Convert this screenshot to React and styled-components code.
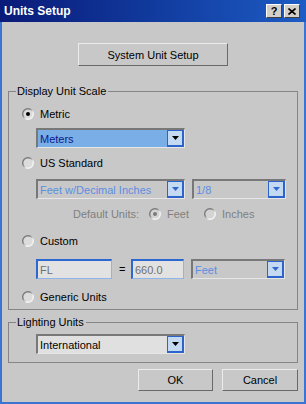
import React, { useId } from "react";
import styled, { createGlobalStyle } from "styled-components";

// ********
// small drawn parts
// ********

function Radio({ checked, disabled }) {
	const id = useId();
	return (
		<RadioSvg viewBox="0 0 12 12">
			<defs>
				<linearGradient id={id} x1="0" y1="0" x2="1" y2="1">
					<stop offset="0.35" stopColor="#7a7a7a" />
					<stop offset="0.65" stopColor="#f4f4f4" />
				</linearGradient>
			</defs>
			<circle cx="6" cy="6" r="5.3" fill={disabled ? "#d4d4d4" : "#dcdcdc"} stroke={`url(#${id})`} strokeWidth="1.4" />
			{checked && <circle cx="6" cy="6" r="2" fill={disabled ? "#7a7a7a" : "#000"} />}
		</RadioSvg>
	);
}

function Arrow({ color }) {
	return (
		<svg width="7" height="4" viewBox="0 0 7 4">
			<path d="M0 0h7L3.5 4z" fill={color} />
		</svg>
	);
}

function Combo({ value, width, variant = "normal" }) {
	return (
		<ComboBox $w={width} $variant={variant}>
			<ComboText $variant={variant}>{value}</ComboText>
			<ComboButton>
				<Arrow color={variant === "disabled" ? "#2f66d0" : "#000"} />
			</ComboButton>
		</ComboBox>
	);
}

// ********
// component
// ********

export default function App() {
	return (
		<>
			<GlobalStyle />
			<Window>
				<TitleBar>
					<span>Units Setup</span>
					<TitleButtons>
						<TitleButton>?</TitleButton>
						<TitleButton>
							<svg width="8" height="7" viewBox="0 0 8 7">
								<path d="M0.5 0.5l7 6M7.5 0.5l-7 6" stroke="#000" strokeWidth="1.6" />
							</svg>
						</TitleButton>
					</TitleButtons>
				</TitleBar>

				<Body>
					<SetupButton>System Unit Setup</SetupButton>

					<Group>
						<Legend>Display Unit Scale</Legend>

						<RadioRow $top={9}>
							<Radio checked />
							<span>Metric</span>
						</RadioRow>
						<Row $top={7}>
							<Combo value="Meters" width={149} variant="active" />
						</Row>

						<RadioRow $top={8}>
							<Radio />
							<span>US Standard</span>
						</RadioRow>
						<Row $top={9}>
							<Combo value="Feet w/Decimal Inches" width={149} variant="disabled" />
							<Combo value="1/8" width={94} variant="disabled" />
						</Row>
						<UnitsRow $top={8}>
							<span>Default Units:</span>
							<Radio checked disabled />
							<span>Feet</span>
							<Radio disabled />
							<span>Inches</span>
						</UnitsRow>

						<RadioRow $top={13}>
							<Radio />
							<span>Custom</span>
						</RadioRow>
						<Row $top={11}>
							<Field $w={76}>FL</Field>
							<Equals>=</Equals>
							<Field $w={53}>660.0</Field>
							<Combo value="Feet" width={94} variant="disabled" />
						</Row>

						<RadioRow $top={11} $bottom={5}>
							<Radio />
							<span>Generic Units</span>
						</RadioRow>
					</Group>

					<Group $top={6}>
						<Legend>Lighting Units</Legend>
						<Row $top={5} $bottom={8}>
							<Combo value="International" width={149} />
						</Row>
					</Group>

					<Footer>
						<DialogButton $w={75}>OK</DialogButton>
						<DialogButton $w={76}>Cancel</DialogButton>
					</Footer>
				</Body>
			</Window>
		</>
	);
}

// ********
// styles
// ********

const GlobalStyle = createGlobalStyle`
	body {
		margin: 0;
		font-family: "Liberation Sans", Arial, sans-serif;
		font-size: 11px;
	}
`;
const Window = styled.div`
	width: 306px;
	height: 404px;
	display: flex;
	flex-direction: column;
	background: #c8c8c8;
	color: #000;
`;
const TitleBar = styled.div`
	height: 22px;
	flex-shrink: 0;
	display: flex;
	align-items: center;
	padding: 0 6px 0 4px;
	background: linear-gradient(90deg, #0a1a78 0%, #10379a 45%, #1d5cc4 100%);
	color: #fff;
	font-weight: bold;
	font-size: 12px;
`;
const TitleButtons = styled.div`
	margin-left: auto;
	display: flex;
	gap: 2px;
`;
const TitleButton = styled.div`
	width: 16px;
	height: 14px;
	box-sizing: border-box;
	display: flex;
	align-items: center;
	justify-content: center;
	background: #d4d0c8;
	border: 1px solid;
	border-color: #fff #404040 #404040 #fff;
	color: #000;
	font-size: 11px;
	font-weight: bold;
`;
const Body = styled.div`
	flex: 1;
	display: flex;
	flex-direction: column;
	padding: 0 6px;
	border: 2px solid #3c74d4;
	border-top: none;
`;
const SetupButton = styled.div`
	align-self: center;
	width: 150px;
	height: 23px;
	margin-top: 21px;
	margin-bottom: 19px;
	box-sizing: border-box;
	display: flex;
	align-items: center;
	justify-content: center;
	border: 1px solid;
	border-color: #ececec #6a6a6a #6a6a6a #ececec;
`;
const Group = styled.fieldset`
	margin: ${(p) => p.$top || 0}px 0 0;
	padding: 0;
	border: 1px solid #858585;
	min-width: 0;
`;
const Legend = styled.legend`
	margin-left: 7px;
	padding: 0 2px 0 1px;
	line-height: 13px;
`;
const Row = styled.div`
	display: flex;
	align-items: center;
	gap: 7px;
	height: 20px;
	padding-left: 27px;
	margin-top: ${(p) => p.$top || 0}px;
	margin-bottom: ${(p) => p.$bottom || 0}px;
`;
const RadioRow = styled.div`
	display: flex;
	align-items: center;
	gap: 6px;
	height: 14px;
	padding-left: 13px;
	margin-top: ${(p) => p.$top || 0}px;
	margin-bottom: ${(p) => p.$bottom || 0}px;
`;
const UnitsRow = styled(RadioRow)`
	padding-left: 64px;
	color: #808080;
	gap: 0;
	& > span:first-child {
		margin-right: 10px;
	}
	& > svg {
		margin-right: 6px;
	}
	& > span:nth-of-type(2) {
		margin-right: 15px;
	}
`;
const RadioSvg = styled.svg`
	width: 12px;
	height: 12px;
	flex-shrink: 0;
`;
const ComboBox = styled.div`
	width: ${(p) => p.$w}px;
	height: 20px;
	box-sizing: border-box;
	flex-shrink: 0;
	display: flex;
	align-items: stretch;
	border-style: solid;
	border-width: 2px 1px 1px 2px;
	border-color: #787878 #e6e6e6 #e6e6e6 #787878;
	background: ${(p) =>
		p.$variant === "active" ? "#7aaee6" : p.$variant === "disabled" ? "#c8c8c8" : "#e0e0e0"};
`;
const ComboText = styled.div`
	flex: 1;
	display: flex;
	align-items: center;
	padding-left: 2px;
	white-space: nowrap;
	overflow: hidden;
	color: ${(p) =>
		p.$variant === "active" ? "#0a1a8a" : p.$variant === "disabled" ? "#5a8ee2" : "#000"};
`;
const ComboButton = styled.div`
	width: 17px;
	box-sizing: border-box;
	display: flex;
	align-items: center;
	justify-content: center;
	background: #c4daf2;
	border: 1px solid #2c64cc;
	border-width: 1px 2px 2px 1px;
`;
const Field = styled.div`
	width: ${(p) => p.$w}px;
	height: 20px;
	box-sizing: border-box;
	flex-shrink: 0;
	display: flex;
	align-items: center;
	padding-left: 2px;
	background: #e2e2e2;
	border-style: solid;
	border-width: 2px 1px 1px 2px;
	border-color: #2c68d0 #8fb4ea #8fb4ea #2c68d0;
	color: #707070;
`;
const Equals = styled.span`
	width: 5px;
`;
const Footer = styled.div`
	display: flex;
	justify-content: flex-end;
	gap: 9px;
	margin-top: 6px;
`;
const DialogButton = styled.div`
	width: ${(p) => p.$w}px;
	height: 22px;
	box-sizing: border-box;
	display: flex;
	align-items: center;
	justify-content: center;
	border: 1px solid;
	border-color: #ececec #6a6a6a #6a6a6a #ececec;
`;
